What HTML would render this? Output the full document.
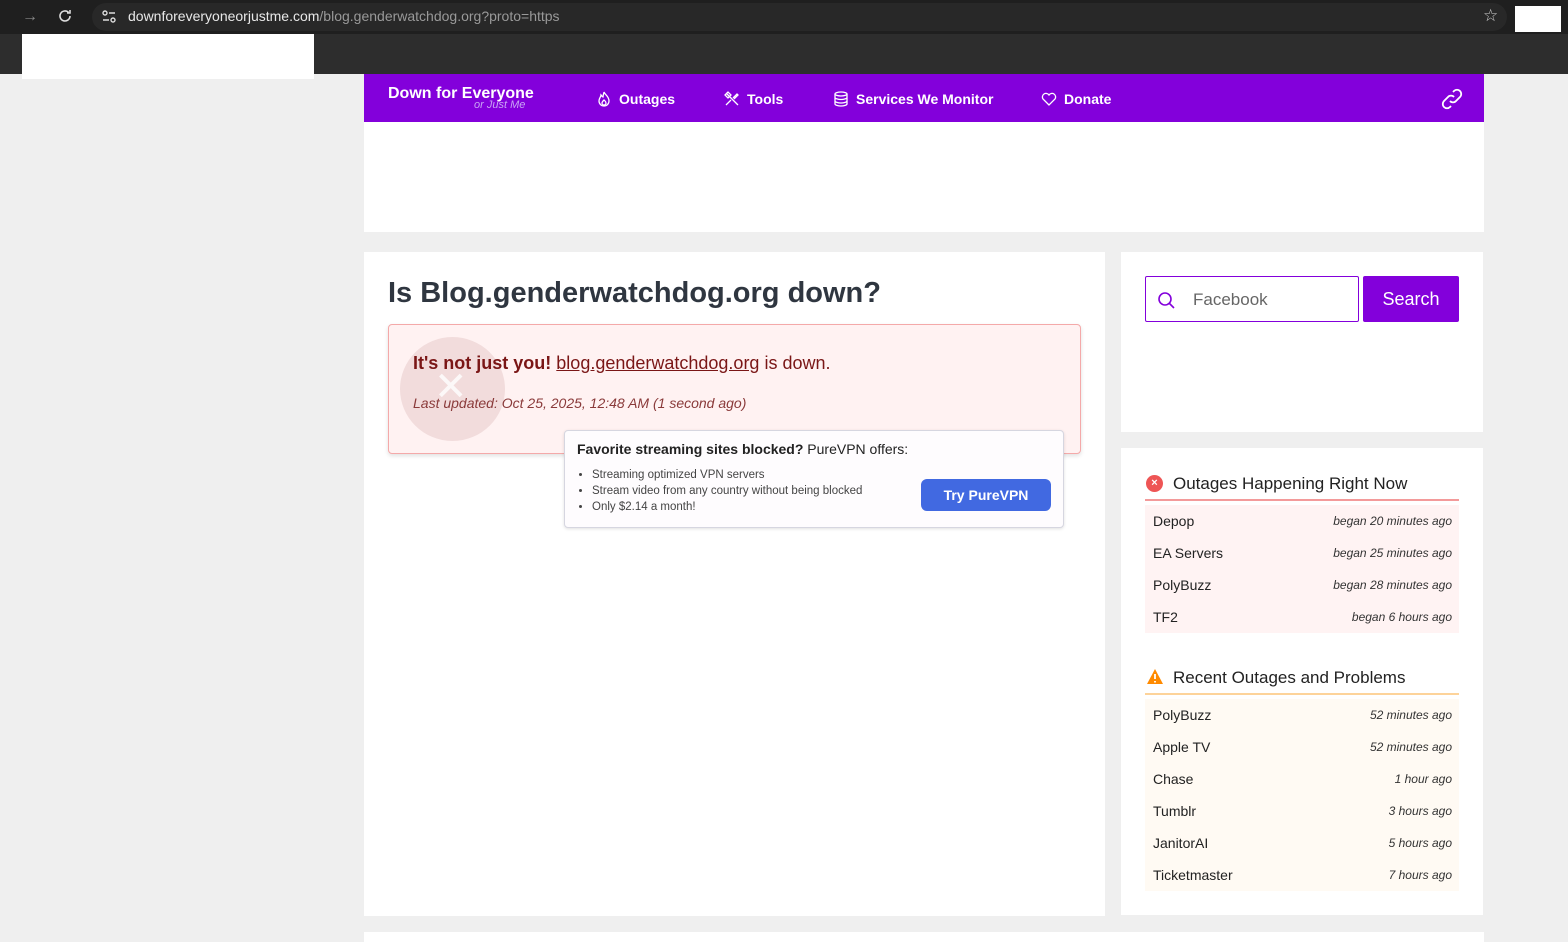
<!DOCTYPE html>
<html><head><meta charset="utf-8"><style>
*{box-sizing:border-box;margin:0;padding:0}
body{width:1568px;height:940px;overflow:hidden;background:#efefef;font-family:"Liberation Sans",sans-serif;position:relative}
.abs{position:absolute}
.top{left:0;top:0;width:1568px;height:34px;background:#1f1f1f}
.bar2{left:0;top:34px;width:1568px;height:40px;background:#2d2d2d}
.url{left:92px;top:3px;width:1415px;height:28px;border-radius:14px;background:#282828}
.nav{left:364px;top:74px;width:1120px;height:48px;background:#8300db;color:#fff}
.nav .it{position:absolute;top:16px;font-size:14px;font-weight:bold;display:flex;align-items:center;gap:6px}
.card{background:#fff}
.row{display:flex;justify-content:space-between;height:32px;align-items:center;padding:0 7px 0 8px;font-size:14px;color:#222}
.row i{font-size:12px;color:#333}
</style></head><body>
<div class="abs top"></div>
<div class="abs" style="left:22px;top:8px;color:#888;font-size:16px">→</div>
<svg class="abs" style="left:57px;top:8px" width="16" height="16" viewBox="0 0 16 16"><path d="M13 8a5 5 0 1 1-1.5-3.6M13 2v3h-3" stroke="#ddd" stroke-width="1.6" fill="none"/></svg>
<div class="abs url"></div>
<svg class="abs" style="left:101px;top:9px" width="16" height="16" viewBox="0 0 16 16"><g stroke="#ddd" stroke-width="1.4" fill="none"><circle cx="4" cy="4" r="2"/><path d="M8 4h6M2 11h6"/><circle cx="12" cy="11" r="2"/></g></svg>
<div class="abs" style="left:128px;top:8px;font-size:14px;color:#e8e8e8">downforeveryoneorjustme.com<span style="color:#999">/blog.genderwatchdog.org?proto=https</span></div>
<div class="abs" style="left:1483px;top:6px;color:#ccc;font-size:17px">☆</div>
<div class="abs" style="left:1515px;top:6px;width:46px;height:26px;background:#fff"></div>
<div class="abs bar2"></div>
<div class="abs" style="left:22px;top:34px;width:292px;height:45px;background:#fff"></div>

<div class="abs nav">
 <div style="position:absolute;left:24px;top:11px;font-size:16px;font-weight:bold">Down for Everyone</div>
 <div style="position:absolute;left:110px;top:25px;font-size:11px;font-style:italic;color:#c9a3f5">or Just Me</div>
 <div class="it" style="left:231px"><svg width="18" height="18" viewBox="0 0 18 18" fill="none" stroke="#fff" stroke-width="1.3"><path d="M9 2c1 3 5 4 5 9a5 5 0 0 1-10 0c0-3 2-4 2-6 1 1 1 2 2 2 0-2 1-4 1-5z"/><path d="M9 10c1 1 2 1.5 2 3a2 2 0 0 1-4 0c0-1 1-2 2-3z"/></svg>Outages</div>
 <div class="it" style="left:359px"><svg width="18" height="18" viewBox="0 0 18 18" fill="none" stroke="#fff" stroke-width="1.3"><path d="M3 3l12 12M3 15l5-5M10 8l4-4 1 1-4 4M2 5l3-3 3 3-3 3z"/></svg>Tools</div>
 <div class="it" style="left:468px"><svg width="18" height="18" viewBox="0 0 18 18" fill="none" stroke="#fff" stroke-width="1.3"><ellipse cx="9" cy="4" rx="6" ry="2"/><path d="M3 4v10c0 1 3 2 6 2s6-1 6-2V4M3 7.5c0 1 3 2 6 2s6-1 6-2M3 11c0 1 3 2 6 2s6-1 6-2"/></svg>Services We Monitor</div>
 <div class="it" style="left:676px"><svg width="18" height="18" viewBox="0 0 18 18" fill="none" stroke="#fff" stroke-width="1.3"><path d="M9 15L3 9a3.5 3.5 0 0 1 6-4 3.5 3.5 0 0 1 6 4z"/></svg>Donate</div>
 <svg style="position:absolute;left:1076px;top:13px" width="24" height="24" viewBox="0 0 24 24" fill="none" stroke="#fff" stroke-width="1.8"><path d="M10 14a4 4 0 0 0 6 0l4-4a4 4 0 0 0-6-6l-1 1M14 10a4 4 0 0 0-6 0l-4 4a4 4 0 0 0 6 6l1-1"/></svg>
</div>
<div class="abs card" style="left:364px;top:122px;width:1120px;height:110px"></div>

<div class="abs card" style="left:364px;top:252px;width:741px;height:664px"></div>
<div class="abs" style="left:388px;top:277px;font-size:29px;font-weight:bold;color:#2f3640">Is Blog.genderwatchdog.org down?</div>
<div class="abs" style="left:388px;top:324px;width:693px;height:130px;background:#fff2f2;border:1px solid #f4a9a9;border-radius:4px;box-shadow:0 2px 4px rgba(0,0,0,.12)"></div>
<div class="abs" style="left:400px;top:337px;width:105px;height:104px;border-radius:50%;background:#f2dcdc"></div>
<div class="abs" style="left:434px;top:364px;color:#fff;font-size:40px;opacity:.8">✕</div>
<div class="abs" style="left:413px;top:353px;font-size:18px;color:#7a1616"><b>It's not just you!</b> <u>blog.genderwatchdog.org</u> is down.</div>
<div class="abs" style="left:413px;top:395px;font-size:14px;color:#8a3a3a;font-style:italic">Last updated: Oct 25, 2025, 12:48 AM (1 second ago)</div>

<div class="abs" style="left:564px;top:430px;width:500px;height:98px;background:#fefcfe;border:1px solid #d6d6e0;border-radius:4px;box-shadow:0 1px 3px rgba(0,0,0,.12)"></div>
<div class="abs" style="left:577px;top:441px;font-size:14px;color:#222"><b>Favorite streaming sites blocked?</b> PureVPN offers:</div>
<ul class="abs" style="left:592px;top:467px;font-size:11.5px;color:#444;line-height:16px">
<li>Streaming optimized VPN servers</li><li>Stream video from any country without being blocked</li><li>Only $2.14 a month!</li></ul>
<div class="abs" style="left:921px;top:479px;width:130px;height:32px;background:#4169e1;border-radius:6px;color:#fff;font-size:14px;font-weight:bold;text-align:center;line-height:32px">Try PureVPN</div>

<div class="abs card" style="left:1121px;top:252px;width:362px;height:180px"></div>
<div class="abs" style="left:1145px;top:276px;width:214px;height:46px;border:1px solid #8300db;border-radius:2px;background:#fff"></div>
<svg class="abs" style="left:1156px;top:290px" width="20" height="20" viewBox="0 0 20 20" fill="none" stroke="#8300db" stroke-width="1.6"><circle cx="9" cy="9" r="6"/><path d="M13.5 13.5L18 18"/></svg>
<div class="abs" style="left:1193px;top:290px;font-size:17px;color:#666">Facebook</div>
<div class="abs" style="left:1363px;top:276px;width:96px;height:46px;background:#8300db;border-radius:2px;color:#fff;font-size:18px;text-align:center;line-height:46px">Search</div>

<div class="abs card" style="left:1121px;top:448px;width:362px;height:467px"></div>
<div class="abs" style="left:1146px;top:475px;width:17px;height:17px;border-radius:50%;background:#ee5555;color:#fff;font-size:11px;text-align:center;line-height:17px;font-weight:bold">×</div>
<div class="abs" style="left:1173px;top:474px;font-size:17px;color:#222">Outages Happening Right Now</div>
<div class="abs" style="left:1145px;top:499px;width:314px;height:2px;background:#f39a9a"></div>
<div class="abs" style="left:1145px;top:505px;width:314px;height:128px;background:#fff3f3">
<div class="row"><span>Depop</span><i>began 20 minutes ago</i></div>
<div class="row"><span>EA Servers</span><i>began 25 minutes ago</i></div>
<div class="row"><span>PolyBuzz</span><i>began 28 minutes ago</i></div>
<div class="row"><span>TF2</span><i>began 6 hours ago</i></div></div>
<svg class="abs" style="left:1146px;top:668px" width="18" height="17" viewBox="0 0 18 17"><path d="M9 1L17 16H1z" fill="#ff8a00"/><path d="M9 6v5M9 13v1.5" stroke="#fff" stroke-width="1.8"/></svg>
<div class="abs" style="left:1173px;top:668px;font-size:17px;color:#222">Recent Outages and Problems</div>
<div class="abs" style="left:1145px;top:693px;width:314px;height:2px;background:#fdd39a"></div>
<div class="abs" style="left:1145px;top:699px;width:314px;height:192px;background:#fffaf3">
<div class="row"><span>PolyBuzz</span><i>52 minutes ago</i></div>
<div class="row"><span>Apple TV</span><i>52 minutes ago</i></div>
<div class="row"><span>Chase</span><i>1 hour ago</i></div>
<div class="row"><span>Tumblr</span><i>3 hours ago</i></div>
<div class="row"><span>JanitorAI</span><i>5 hours ago</i></div>
<div class="row"><span>Ticketmaster</span><i>7 hours ago</i></div></div>
<div class="abs card" style="left:364px;top:932px;width:1120px;height:10px"></div>
</body></html>
